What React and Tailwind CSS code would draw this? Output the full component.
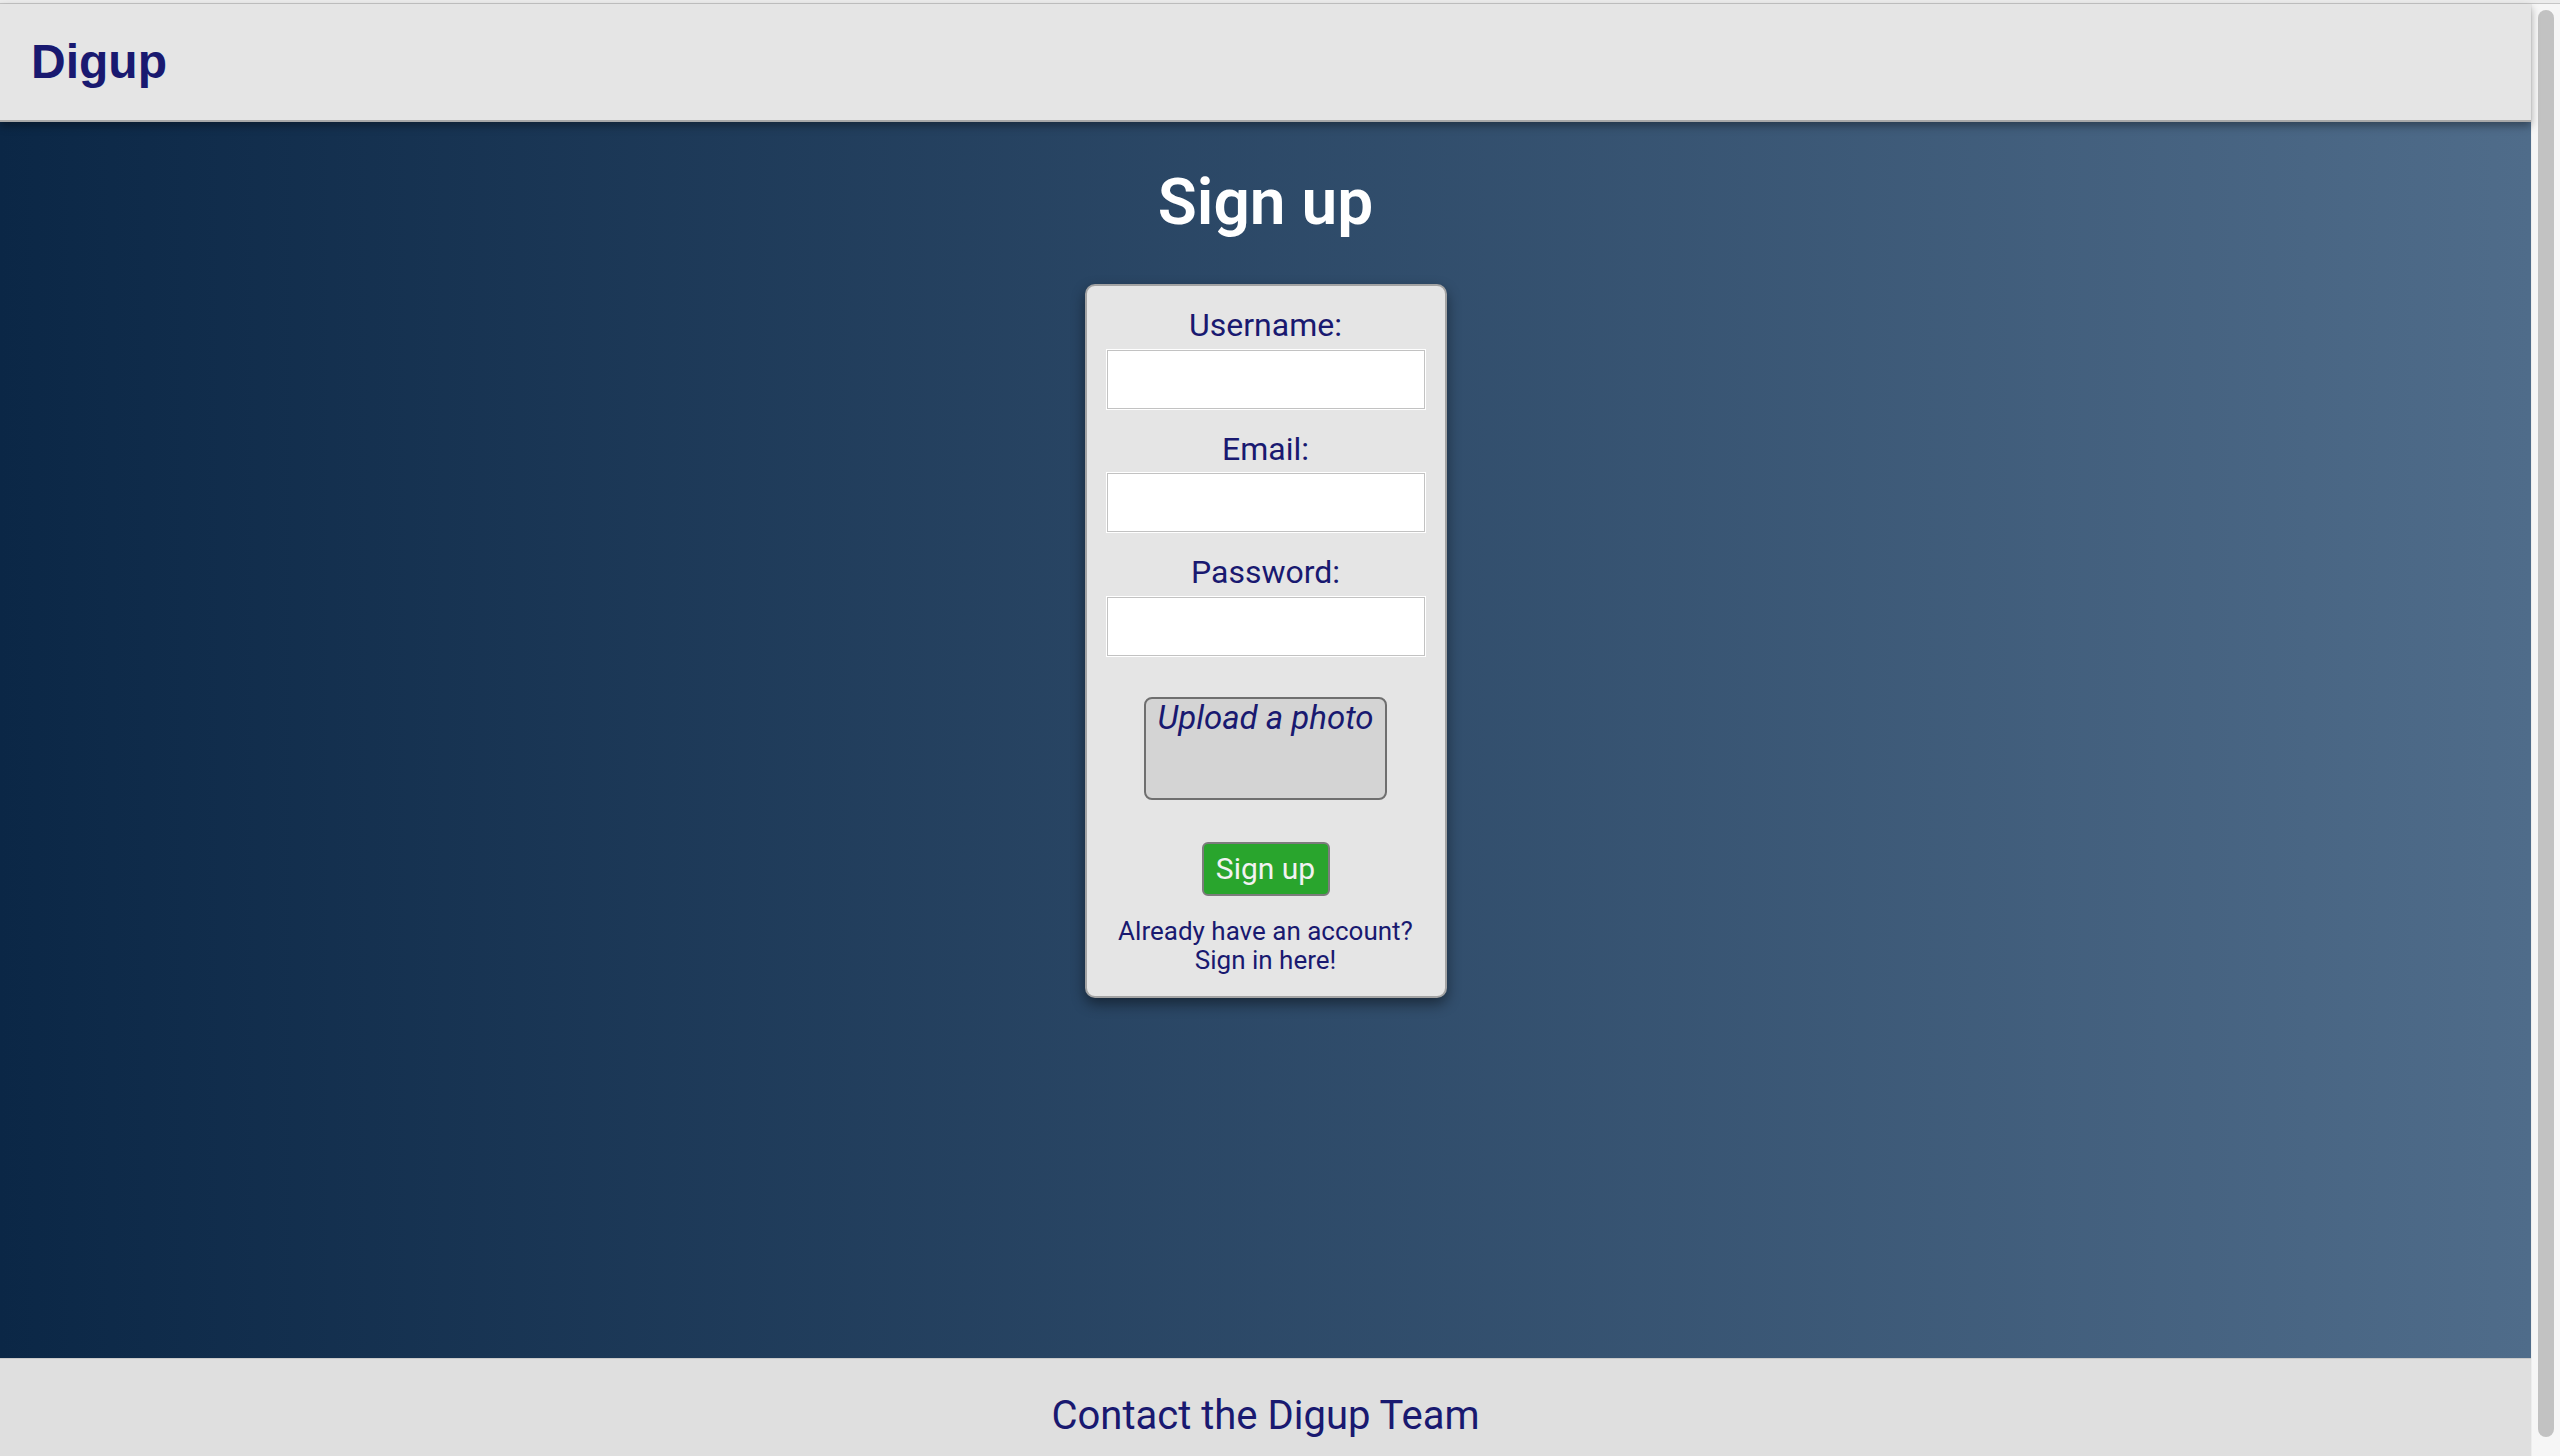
export default function App() {
  return (
    <div className="flex h-[1456px] w-full flex-col overflow-hidden bg-[#ececec] font-['Roboto',sans-serif]">
      <div className="h-[3px] w-full bg-[#ececec]" />
      <div className="h-px w-full bg-[#c6c6c6]" />
      <div className="flex min-h-0 flex-1">
        <div className="flex min-w-0 flex-1 flex-col">
          <header className="relative z-10 flex h-[118px] shrink-0 items-center border-b-2 border-[#a9a9a9] bg-[#e5e5e5] px-[31px] shadow-[0_4px_8px_rgba(0,0,0,0.35)]">
            <span className="font-['Liberation_Sans',Arial,sans-serif] text-[48px] font-bold leading-none text-[#191970]">
              Digup
            </span>
          </header>
          <main className="flex flex-1 flex-col items-center bg-[linear-gradient(to_right,#0b2746,#4f6c8a)]">
            <h1 className="mt-[43px] text-[64px] font-semibold leading-[75px] text-white">Sign up</h1>
            <div className="mt-[44px] flex w-[362px] flex-col items-stretch rounded-[10px] border-2 border-[#a3a3a3] bg-[#e5e5e5] px-[20px] pb-[21px] pt-[20px] shadow-[0_6px_14px_rgba(0,0,0,0.45)]">
              <label className="text-center text-[32px] leading-[38px] text-[#191970]">Username:</label>
              <input
                type="text"
                className="mt-[6px] h-[59px] w-full border border-[#c2c2c2] bg-white shadow-[0_0_0_1px_#ffffff] outline-none"
              />
              <label className="mt-[21px] text-center text-[32px] leading-[38px] text-[#191970]">Email:</label>
              <input
                type="email"
                className="mt-[5px] h-[59px] w-full border border-[#c2c2c2] bg-white shadow-[0_0_0_1px_#ffffff] outline-none"
              />
              <label className="mt-[21px] text-center text-[32px] leading-[38px] text-[#191970]">Password:</label>
              <input
                type="password"
                className="mt-[6px] h-[59px] w-full border border-[#c2c2c2] bg-white shadow-[0_0_0_1px_#ffffff] outline-none"
              />
              <div className="mt-[41px] flex justify-center">
                <div className="flex h-[103px] w-[243px] justify-center rounded-[8px] border-2 border-[#6f6f6f] bg-[#d4d4d4]">
                  <span className="text-[33px] italic leading-[38px] text-[#191970]">Upload a photo</span>
                </div>
              </div>
              <div className="mt-[42px] flex justify-center">
                <button className="flex h-[54px] w-[128px] items-center justify-center rounded-[6px] border-2 border-[#7c7c7c] bg-[#29a52d] text-[30px] leading-none text-[#f2f2f2]">
                  Sign up
                </button>
              </div>
              <p className="mt-[21px] text-center text-[26px] leading-[29px] text-[#191970]">
                Already have an account?
                <br />
                Sign in here!
              </p>
            </div>
          </main>
          <footer className="flex h-[98px] shrink-0 justify-center border-t border-[#c9c9c9] bg-[#dfdfdf] pt-[33px]">
            <span className="text-[40px] leading-[47px] text-[#191970]">Contact the Digup Team</span>
          </footer>
        </div>
        <div className="flex w-[29px] shrink-0 justify-center border-l border-[#ededed] bg-[#f6f6f6]">
          <div className="mt-[6px] h-[1427px] w-[16px] rounded-full bg-[#c2c2c2]" />
        </div>
      </div>
    </div>
  );
}
